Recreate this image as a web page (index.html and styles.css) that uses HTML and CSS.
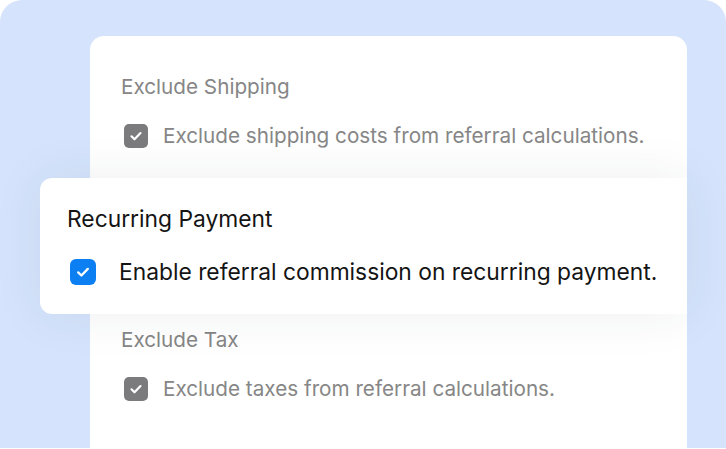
FILE: index.html
```html
<!DOCTYPE html>
<html>
<head>
<meta charset="utf-8">
<link rel="stylesheet" href="styles.css">
</head>
<body>
<div class="frame">
  <div class="card">
    <div class="section section-top">
      <div class="title muted">Exclude Shipping</div>
      <div class="row">
        <span class="box box-gray"><svg viewBox="0 0 24 24" width="24" height="24"><path d="M7.5 12.3l3 3 6-6.2" fill="none" stroke="#fff" stroke-width="2.2" stroke-linecap="round" stroke-linejoin="round"/></svg></span>
        <span class="label muted">Exclude shipping costs from referral calculations.</span>
      </div>
    </div>
    <div class="panel">
      <div class="title strong">Recurring Payment</div>
      <div class="row row-strong">
        <span class="box box-blue"><svg viewBox="0 0 26 26" width="26" height="26"><path d="M8.2 13.4l3.2 3.1 6.4-6.6" fill="none" stroke="#fff" stroke-width="2.3" stroke-linecap="round" stroke-linejoin="round"/></svg></span>
        <span class="label strong">Enable referral commission on recurring payment.</span>
      </div>
    </div>
    <div class="section section-bottom">
      <div class="title muted">Exclude Tax</div>
      <div class="row">
        <span class="box box-gray"><svg viewBox="0 0 24 24" width="24" height="24"><path d="M7.5 12.3l3 3 6-6.2" fill="none" stroke="#fff" stroke-width="2.2" stroke-linecap="round" stroke-linejoin="round"/></svg></span>
        <span class="label muted">Exclude taxes from referral calculations.</span>
      </div>
    </div>
  </div>
</div>
</body>
</html>
```
FILE: styles.css
```css
* { box-sizing: border-box; }
html, body {
  margin: 0;
  padding: 0;
  background: #ffffff;
}
body {
  font-family: Inter, "Noto Sans", sans-serif;
  width: 726px;
  height: 449px;
  overflow: hidden;
}
.frame {
  width: 726px;
  height: 448px;
  background: #d5e4fc;
  border-radius: 22px 22px 0 0;
  padding: 36px 39px 0 90px;
  overflow: hidden;
}
.card {
  height: 100%;
  background: #ffffff;
  border-radius: 14px 14px 0 0;
  display: flex;
  flex-direction: column;
}
.section {
  padding-left: 31px;
}
.section-top {
  padding-top: 39px;
  padding-bottom: 30px;
}
.section-bottom {
  padding-top: 14px;
}
.title {
  font-size: 20.7px;
  line-height: 24px;
  font-weight: 400;
}
.muted {
  color: #868686;
}
.strong {
  color: #141414;
}
.row {
  display: flex;
  align-items: center;
  margin-top: 25px;
  padding-left: 3px;
  gap: 15px;
}
.label {
  font-size: 20.7px;
  line-height: 24px;
}
.box {
  flex: none;
  display: flex;
  border-radius: 5px;
}
.box-gray {
  width: 24px;
  height: 24px;
  background: #7b7b7e;
}
.box-blue {
  width: 26px;
  height: 26px;
  background: #0c7ff2;
  border-radius: 6px;
}
.panel {
  position: relative;
  margin-left: -50px;
  height: 136px;
  background: #ffffff;
  border-radius: 12px 0 0 12px;
  padding: 27px 0 0 26px;
  box-shadow: 0 0 50px rgba(40, 50, 70, 0.08);
}
.panel .title {
  font-size: 22.8px;
  line-height: 28px;
  padding-left: 1px;
}
.row-strong {
  margin-top: 25px;
  padding-left: 4px;
  gap: 23px;
}
.row-strong .label {
  font-size: 22.8px;
  line-height: 28px;
}
```
